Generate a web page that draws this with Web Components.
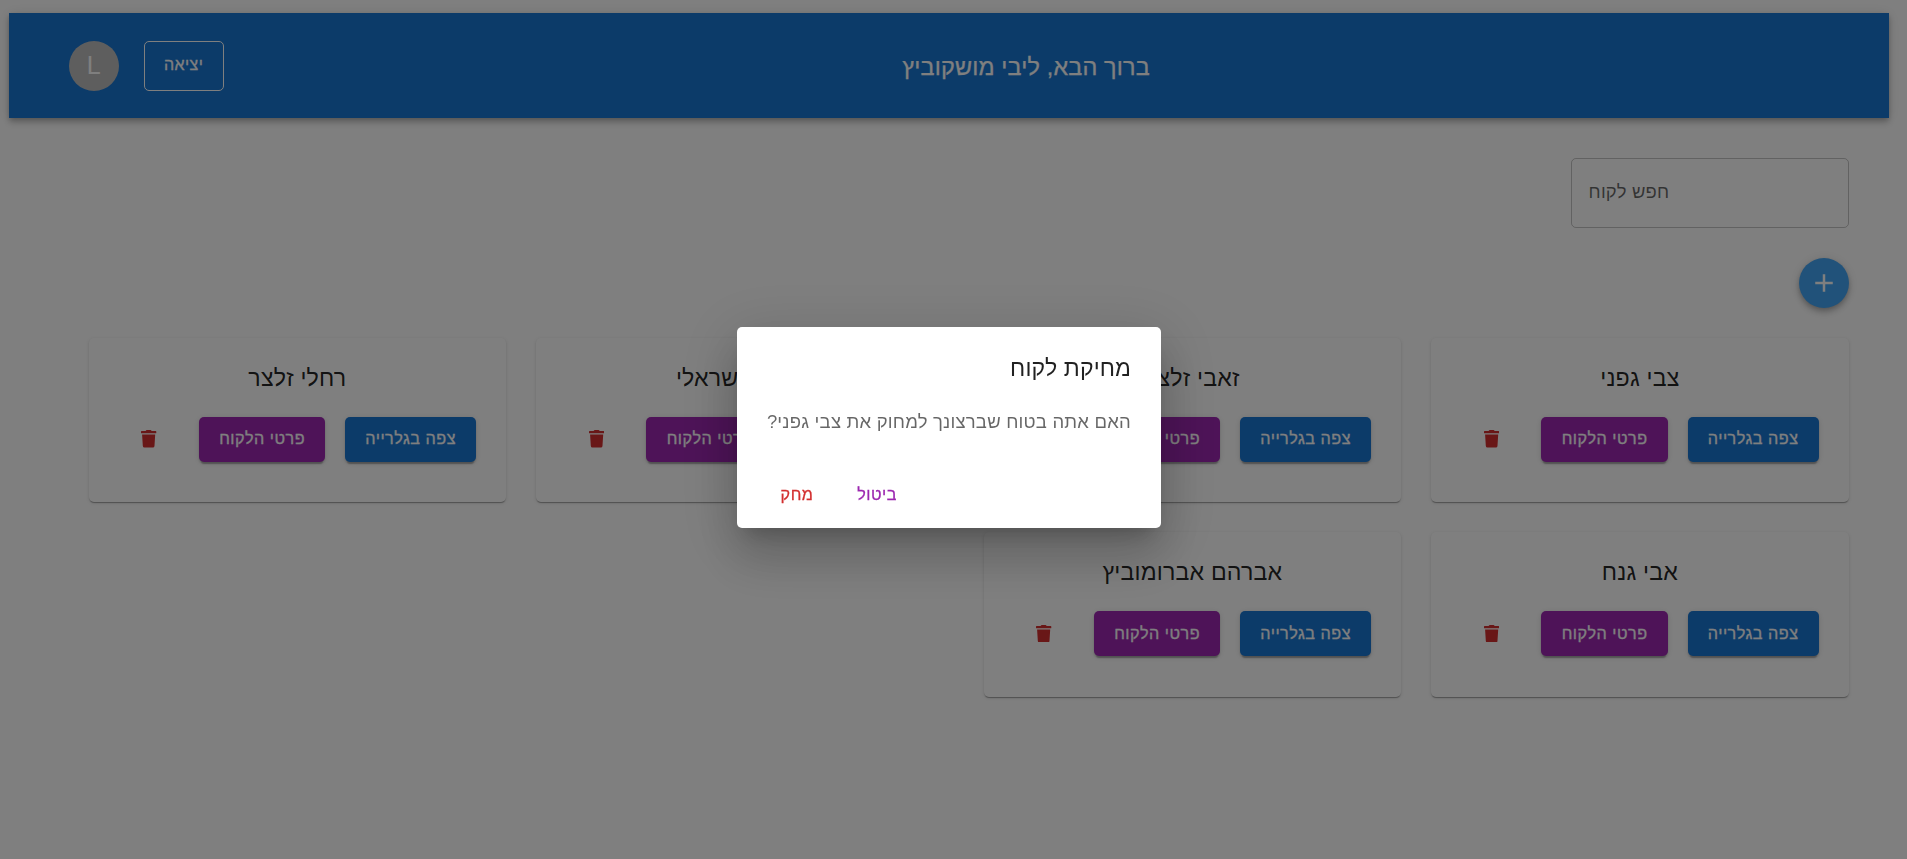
<!DOCTYPE html>
<html lang="he">
<head>
<meta charset="utf-8">
<title>לקוחות</title>
<style>
html,body{margin:0;height:100%;overflow:hidden;background:#fff}
body{font-family:"Liberation Sans",sans-serif}
</style>
</head>
<body>
<client-page></client-page>
<script>
function define(name, markup) {
  const t = document.createElement('template');
  t.innerHTML = markup;
  customElements.define(name, class extends HTMLElement {
    constructor() {
      super();
      this.attachShadow({ mode: 'open' }).append(t.content.cloneNode(true));
    }
  });
}

define('ui-button', `
<style>
:host{display:block;flex:none}
button{font-family:inherit;font-size:16.2px;font-weight:500;line-height:30.6px;letter-spacing:.5px;-webkit-text-stroke:.28px currentColor;box-sizing:border-box;width:100%;height:var(--h,45.4px);padding:0 0 1px;border:0;border-radius:5px;color:var(--fg,#fff);background:var(--bg,transparent);display:flex;align-items:center;justify-content:center;white-space:nowrap;box-shadow:var(--shadow,none)}
:host([contained]){--shadow:0 4px 1px -2px rgba(0,0,0,.2),0 2px 2px rgba(0,0,0,.14),0 1px 6px rgba(0,0,0,.12)}
:host([outlined]) button{border:1px solid #fff;padding:0;font-size:16px;letter-spacing:.4px}
</style><button><slot></slot></button>`);

define('trash-icon', `
<style>:host{display:flex;justify-content:center;align-items:center;color:#d32f2f}svg{width:15.3px;height:17.5px;display:block}</style>
<svg viewBox="0 0 448 512" fill="currentColor"><path d="M432 32H312l-9.4-18.7A24 24 0 0 0 281.1 0H166.8a23.72 23.72 0 0 0-21.4 13.3L136 32H16A16 16 0 0 0 0 48v32a16 16 0 0 0 16 16h416a16 16 0 0 0 16-16V48a16 16 0 0 0-16-16zM53.2 467a48 48 0 0 0 47.9 45h245.8a48 48 0 0 0 47.9-45L416 128H32z"/></svg>`);

define('app-header', `
<style>
:host{display:flex;align-items:center;direction:ltr;height:105px;box-sizing:border-box;padding:1px 60px 0;background:#1976d2;color:#fff;box-shadow:0 2px 5px -1px rgba(0,0,0,.2),0 5px 6px rgba(0,0,0,.14),0 1px 12px rgba(0,0,0,.12)}
.avatar{width:50px;height:50px;border-radius:50%;background:#bdbdbd;display:flex;align-items:center;justify-content:center;font-size:25px;line-height:1;margin-right:25px}
ui-button{width:80px;--h:50px}
h1{flex:1;margin:2px 0 0;text-align:center;font-size:23.4px;font-weight:500;line-height:40px;letter-spacing:.17px;-webkit-text-stroke:.25px currentColor;direction:rtl}
</style>
<div class="avatar">L</div><ui-button outlined>יציאה</ui-button><h1><slot></slot></h1>`);

define('search-field', `
<style>
:host{display:flex;align-items:center;box-sizing:border-box;width:278px;height:70px;border:1px solid rgba(0,0,0,.23);border-radius:5px;padding:0 17px 1px;direction:ltr;color:rgba(0,0,0,.6);font-size:18.4px;letter-spacing:.19px}
</style><label><slot></slot></label>`);

define('add-button', `
<style>
:host{display:flex;align-items:center;justify-content:center;width:50px;height:50px;border-radius:50%;background:#42a5f5;color:#fff;box-shadow:0 2px 5px -1px rgba(0,0,0,.2),0 5px 6px rgba(0,0,0,.14),0 1px 12px rgba(0,0,0,.12)}
svg{width:30px;height:30px}
</style><svg viewBox="0 0 24 24" fill="currentColor"><path d="M19 13h-6v6h-2v-6H5v-2h6V5h2v6h6v2z"/></svg>`);

define('client-card', `
<style>
:host{display:block;box-sizing:border-box;height:164.5px;padding:20px 30px 0;border-radius:5px;background:#fff;color:rgba(0,0,0,.87);box-shadow:0 2px 1px -1px rgba(0,0,0,.2),0 1px 1px rgba(0,0,0,.14),0 1px 4px rgba(0,0,0,.12)}
h2{margin:0 0 19px;text-align:center;font-size:23.2px;font-weight:500;line-height:40px;letter-spacing:.17px}
.row{display:flex;justify-content:space-between;align-items:center}
.gallery{width:131px;--bg:#1976d2}.details{width:126.5px;--bg:#9c27b0}
trash-icon{width:60.6px}
</style>
<h2><slot></slot></h2>
<div class="row"><ui-button class="gallery" contained>צפה בגלרייה</ui-button><ui-button class="details" contained>פרטי הלקוח</ui-button><trash-icon></trash-icon></div>`);

define('confirm-dialog', `
<style>
:host{position:fixed;inset:0;box-sizing:border-box;padding-right:9px;display:flex;align-items:center;justify-content:center;background:rgba(0,0,0,.5);direction:rtl}
section{width:424px;height:201px;box-sizing:border-box;background:#fff;border-radius:5px;margin-bottom:4px;box-shadow:0 14px 19px -9px rgba(0,0,0,.2),0 30px 48px 4px rgba(0,0,0,.14),0 11px 58px 10px rgba(0,0,0,.12);color:rgba(0,0,0,.87)}
h2{margin:0;padding:21px 30px 19px;font-size:23.1px;font-weight:500;line-height:40px;letter-spacing:.1px}
p{margin:0;padding:0 30px;font-size:18.5px;line-height:30px;letter-spacing:.2px;color:rgba(0,0,0,.6);white-space:nowrap}
.actions{direction:ltr;display:flex;padding:35px 10px 0 20px}
ui-button{width:80px}
.del{--fg:#d32f2f}.cancel{--fg:#9c27b0}
</style>
<section><h2><slot name="title"></slot></h2><p><slot></slot></p>
<div class="actions"><ui-button class="del">מחק</ui-button><ui-button class="cancel">ביטול</ui-button></div></section>`);

define('client-page', `
<style>
:host{display:block;box-sizing:border-box;padding:12.5px 18.4px 0 8.6px;direction:rtl}
main{padding:40px 40px 0 80px}
add-button{margin:30px 0}
.grid{display:grid;grid-template-columns:repeat(4,1fr);gap:30px}
</style>
<app-header>ברוך הבא, ליבי מושקוביץ</app-header>
<main><search-field>חפש לקוח</search-field><add-button></add-button>
<div class="grid"><client-card>צבי גפני</client-card><client-card>זאבי זלצר</client-card><client-card>ישראל ישראלי</client-card><client-card>רחלי זלצר</client-card><client-card>אבי גנח</client-card><client-card>אברהם אברומוביץ</client-card></div></main>
<confirm-dialog><span slot="title">מחיקת לקוח</span>האם אתה בטוח שברצונך למחוק את צבי גפני?</confirm-dialog>`);
</script>
</body>
</html>
